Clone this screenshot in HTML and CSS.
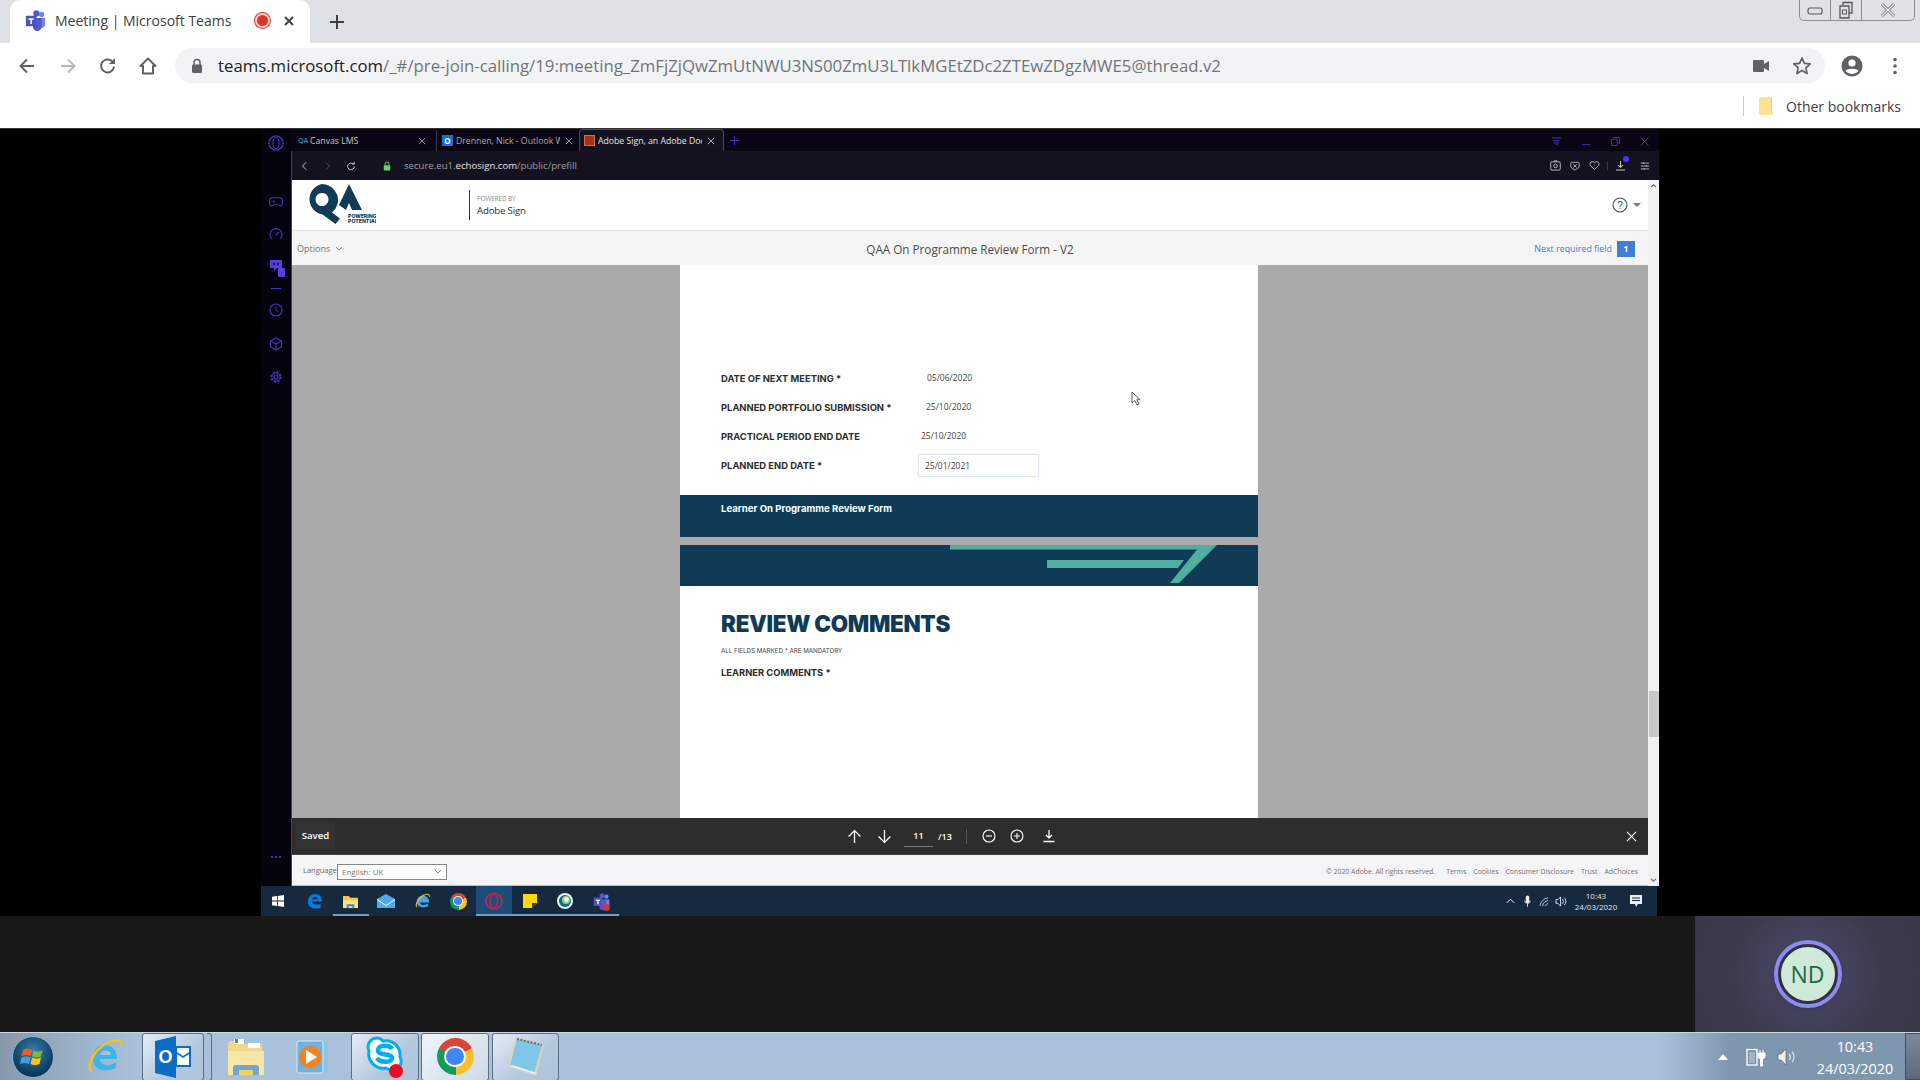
FILE: index.html
```html
<!DOCTYPE html>
<html lang="en">
<head>
<meta charset="utf-8">
<title>Meeting | Microsoft Teams</title>
<link rel="stylesheet" href="styles.css">
</head>
<body>
<svg class="defs" width="0" height="0" aria-hidden="true">
  <symbol id="teams" viewBox="0 0 24 24">
    <circle cx="19" cy="5" r="3" fill="#7b83eb"/><circle cx="13" cy="4" r="3.6" fill="#5059c9"/>
    <path d="M15 9h8v8a4 4 0 0 1-6 3z" fill="#7b83eb"/><path d="M8 9h11v10a5 5 0 0 1-10 0z" fill="#5059c9"/>
    <rect x="1" y="6.5" width="12" height="12" rx="1" fill="#4b53bc"/>
    <path d="M4 9.5h6v1.6H7.9V16H6.1v-4.9H4z" fill="#fff"/>
  </symbol>
</svg>

<header class="chrome">
  <div class="tabstrip">
    <div class="ctab">
      <svg class="ctab-ico" viewBox="0 0 24 24"><use href="#teams"/></svg>
      <span class="ctab-title">Meeting | Microsoft Teams</span>
      <span class="rec"></span>
      <svg class="ctab-x" viewBox="0 0 12 12"><path d="M2 2l8 8M10 2l-8 8" stroke="#3c4043" stroke-width="1.9"/></svg>
    </div>
    <svg class="newtab" viewBox="0 0 16 16"><path d="M8 1v14M1 8h14" stroke="#3c4043" stroke-width="2"/></svg>
    <div class="winctl">
      <span class="winbtn w1"><svg viewBox="0 0 16 10" width="16" height="10"><rect x="1" y="3" width="14" height="6" rx="2" fill="none" stroke="#55595f" stroke-width="1.2"/></svg></span>
      <span class="winbtn w2"><svg viewBox="0 0 18 18" width="18" height="18"><path d="M6 4V1.5h9V12h-3M3 5h9v12H3z" fill="#dee1e6" stroke="#55595f" stroke-width="1.3"/><rect x="5.5" y="9" width="4" height="4" fill="none" stroke="#55595f"/></svg></span>
      <span class="winbtn w3"><svg viewBox="0 0 16 16" width="16" height="16"><path d="M2 2l12 12M14 2L2 14" stroke="#6c7077" stroke-width="3"/><path d="M2 2l12 12M14 2L2 14" stroke="#eef0f2" stroke-width="1.4"/></svg></span>
    </div>
  </div>
  <div class="ctoolbar">
    <span class="cslot s-back"><svg viewBox="0 0 20 20" width="20" height="20"><path d="M17 10H4M10 3.500l-6.500 6.500 6.500 6.500" fill="none" stroke="#5f6368" stroke-width="2"/></svg></span>
    <span class="cslot s-fwd"><svg viewBox="0 0 20 20" width="20" height="20"><path d="M3 10h13M10 3.500l6.500 6.500-6.500 6.500" fill="none" stroke="#b6b9bd" stroke-width="2"/></svg></span>
    <span class="cslot s-rel"><svg viewBox="0 0 20 20" width="20" height="20"><path d="M16 10.500a6.500 6.500 0 1 1-2-5.300" fill="none" stroke="#5f6368" stroke-width="2"/><path d="M17 2v6h-6z" fill="#5f6368"/></svg></span>
    <span class="cslot s-home"><svg viewBox="0 0 20 20" width="20" height="20"><path d="M10 2.500L2.500 10H5v7.500h10V10h2.500z" fill="none" stroke="#5f6368" stroke-width="2" stroke-linejoin="round"/></svg></span>
    <div class="omnibox">
      <svg class="lock" viewBox="0 0 12 16" width="12" height="16"><path d="M3 7V4.500a3 3 0 0 1 6 0V7" fill="none" stroke="#5f6368" stroke-width="1.5"/><rect x="1" y="6.500" width="10" height="8.500" rx="1.200" fill="#5f6368"/></svg>
      <span class="url"><b>teams.microsoft.com</b>/_#/pre-join-calling/19:meeting_ZmFjZjQwZmUtNWU3NS00ZmU3LTlkMGEtZDc2ZTEwZDgzMWE5@thread.v2</span>
      <svg class="omni-cam" viewBox="0 0 18 14" width="18" height="14"><rect x="1" y="1" width="11" height="12" rx="1" fill="#5f6368"/><path d="M12 5l5-3v10l-5-3z" fill="#5f6368"/></svg>
      <svg class="omni-star" viewBox="0 0 20 20" width="20" height="20"><path d="M10 2l2.400 5.300 5.800.6-4.300 3.900 1.200 5.700L10 14.600l-5.100 2.900 1.200-5.700L1.800 7.900l5.800-.6z" fill="none" stroke="#5f6368" stroke-width="1.700" stroke-linejoin="round"/></svg>
    </div>
    <span class="cslot s-avatar"><svg viewBox="0 0 22 22" width="22" height="22"><circle cx="11" cy="11" r="10.500" fill="#5f6368"/><circle cx="11" cy="8" r="3.600" fill="#fff"/><path d="M4.500 16c2-3 11-3 13 0a8.500 8.500 0 0 1-13 0z" fill="#fff"/></svg></span>
    <span class="cslot s-menu"><svg viewBox="0 0 4 18" width="4" height="18"><circle cx="2" cy="2.500" r="1.800" fill="#5f6368"/><circle cx="2" cy="9" r="1.800" fill="#5f6368"/><circle cx="2" cy="15.500" r="1.800" fill="#5f6368"/></svg></span>
  </div>
  <div class="bookmarks">
    <span class="bm-sep"></span>
    <svg class="bm-folder" viewBox="0 0 16 20" width="16" height="20"><path d="M1 2.500A1.500 1.500 0 0 1 2.500 1H13v14h2v3a1 1 0 0 1-1 1H2.500A1.500 1.500 0 0 1 1 17.500z" fill="#fde293"/><path d="M13 1l1 1v13h-1z" fill="#f6cf62"/></svg>
    <span class="bm-label">Other bookmarks</span>
  </div>
</header>

<main class="remote">
  <div class="inner">
    <div class="opera">
      <nav class="op-side">
        <svg class="op-logo" viewBox="0 0 18 18" width="16" height="16"><circle cx="9" cy="9" r="8" fill="none" stroke="#4a33b8" stroke-width="1.500"/><ellipse cx="9" cy="9" rx="3.500" ry="6.500" fill="none" stroke="#4a33b8" stroke-width="1.300"/></svg>
        <svg class="si si-game" viewBox="0 0 16 14" width="14" height="12"><path d="M4 2h8a3.500 3.500 0 0 1 3.500 4v3a2.500 2.500 0 0 1-4.500 1.500L10 9.500H6l-1 1A2.500 2.500 0 0 1 .5 9V6A3.500 3.500 0 0 1 4 2z" fill="none" stroke="#4a33b8" stroke-width="1.200"/><path d="M4 6.500h3M5.500 5v3" stroke="#4a33b8"/></svg>
        <svg class="si si-speed" viewBox="0 0 14 14" width="14" height="14"><path d="M3 12a6 6 0 1 1 8 0" fill="none" stroke="#4a33b8" stroke-width="1.200"/><path d="M7 8l3-3" stroke="#4a33b8" stroke-width="1.300"/></svg>
        <span class="si si-twitch">
          <svg viewBox="0 0 14 14" width="14" height="14"><path d="M1 1h12v8h-5l-3 3V9H1z" fill="#5a3fe0"/><path d="M5 3.500v3M9 3.500v3" stroke="#090414" stroke-width="1.300"/></svg>
          <span class="tw-badge"></span>
        </span>
        <span class="si si-dash"></span>
        <svg class="si si-clock" viewBox="0 0 14 14" width="14" height="14"><circle cx="7" cy="7" r="6" fill="none" stroke="#4a33b8" stroke-width="1.200"/><path d="M7 3.500V7l2.500 1.500" fill="none" stroke="#4a33b8"/></svg>
        <svg class="si si-cube" viewBox="0 0 14 14" width="14" height="14"><path d="M7 1l5.500 3v6L7 13l-5.500-3V4zM1.500 4L7 7l5.500-3M7 7v6" fill="none" stroke="#4a33b8" stroke-width="1.100"/></svg>
        <svg class="si si-gear" viewBox="0 0 14 14" width="14" height="14"><circle cx="7" cy="7" r="2" fill="none" stroke="#4a33b8" stroke-width="1.100"/><circle cx="7" cy="7" r="4.600" fill="none" stroke="#4a33b8" stroke-width="2.400" stroke-dasharray="1.800 1.800"/><circle cx="7" cy="7" r="4.200" fill="none" stroke="#4a33b8" stroke-width=".8"/></svg>
        <span class="si-dots"><i></i><i></i><i></i></span>
      </nav>
      <div class="op-main">
        <div class="op-tabs">
          <div class="otab ot1">
            <span class="ot-qa">QA</span><span class="ot-text">Canvas LMS</span>
            <svg class="ot-x" viewBox="0 0 10 10" width="8" height="8"><path d="M1 1l8 8M9 1l-8 8" stroke="#b6b6bd"/></svg>
          </div>
          <div class="otab ot2">
            <span class="ot-ol">O</span><span class="ot-text ot-fade">Drennen, Nick - Outlook W</span>
            <svg class="ot-x" viewBox="0 0 10 10" width="8" height="8"><path d="M1 1l8 8M9 1l-8 8" stroke="#b6b6bd"/></svg>
          </div>
          <div class="otab ot3">
            <span class="ot-ad"></span><span class="ot-text ot-active">Adobe Sign, an Adobe Doc</span>
            <svg class="ot-x" viewBox="0 0 10 10" width="8" height="8"><path d="M1 1l8 8M9 1l-8 8" stroke="#d4d4da"/></svg>
          </div>
          <svg class="ot-plus" viewBox="0 0 10 10" width="9" height="9"><path d="M5 0v10M0 5h10" stroke="#4a33c8"/></svg>
          <div class="op-winctl">
            <svg viewBox="0 0 12 10" width="11" height="9"><path d="M1 1h10M2.500 4h7M6 9L3.500 6.500h5z" fill="none" stroke="#4a33c8"/></svg>
            <svg viewBox="0 0 10 10" width="9" height="9"><path d="M0 8.500h9" stroke="#4a33c8"/></svg>
            <svg viewBox="0 0 10 10" width="9" height="9"><path d="M3 2V.5h6.500V7H8M.5 2.500H7V9.500H.5z" fill="none" stroke="#4a33c8"/></svg>
            <svg viewBox="0 0 10 10" width="9" height="9"><path d="M.5.5l9 9M9.500.5l-9 9" stroke="#4a33c8"/></svg>
          </div>
        </div>
        <div class="op-addr">
          <svg class="oa-nav n1" viewBox="0 0 8 12" width="6" height="10"><path d="M7 1L2 6l5 5" fill="none" stroke="#c9c9cf" stroke-width="1.300"/></svg>
          <svg class="oa-nav n2" viewBox="0 0 8 12" width="6" height="10"><path d="M1 1l5 5-5 5" fill="none" stroke="#55535e" stroke-width="1.300"/></svg>
          <svg class="oa-nav n3" viewBox="0 0 12 12" width="10" height="10"><path d="M10 6.500a4 4 0 1 1-1.300-3" fill="none" stroke="#c9c9cf" stroke-width="1.200"/><path d="M10.500 1v3.300H7.200z" fill="#c9c9cf"/></svg>
          <svg class="oa-lock" viewBox="0 0 10 12" width="8" height="10"><path d="M2.500 5V3.500a2.500 2.500 0 0 1 5 0V5" fill="none" stroke="#6fd06f" stroke-width="1.200"/><rect x="1" y="5" width="8" height="6.500" rx=".7" fill="#6fd06f"/></svg>
          <span class="oa-url">secure.eu1.<b>echosign.com</b>/public/prefill</span>
          <div class="oa-tools">
            <svg viewBox="0 0 12 12" width="11" height="11"><rect x=".8" y="2" width="10.400" height="9" rx="1.500" fill="none" stroke="#c4c4cb"/><circle cx="6" cy="6.500" r="2" fill="none" stroke="#c4c4cb"/><path d="M4 2l.8-1.200h2.400L8 2" fill="none" stroke="#c4c4cb"/></svg>
            <svg viewBox="0 0 12 12" width="10" height="10"><path d="M2 1.500h8l1 1v5L6 11 1 7.500v-5z" fill="none" stroke="#c4c4cb"/><path d="M4 4.200l4 3.600M8 4.200l-4 3.600" stroke="#c4c4cb"/></svg>
            <svg viewBox="0 0 12 12" width="11" height="11"><path d="M6 10.500L1.500 6A2.700 2.700 0 0 1 6 3a2.700 2.700 0 0 1 4.500 3z" fill="none" stroke="#c4c4cb"/></svg>
            <span class="oa-sep"></span>
            <span class="oa-dl"><svg viewBox="0 0 12 12" width="11" height="11"><path d="M6 1v7M3.500 5.500L6 8l2.500-2.500M1 10.800h10" fill="none" stroke="#c4c4cb" stroke-width="1.100"/></svg><i class="oa-dot"></i></span>
            <svg viewBox="0 0 12 12" width="10" height="10"><path d="M1 2.500h10M1 6h10M1 9.500h10M4 1.500v2M8 5v2M5 8.500v2" stroke="#c4c4cb"/></svg>
          </div>
        </div>
        <div class="page-wrap">
          <div class="page-col">
            <div class="topbar">
              <svg class="qa-logo" viewBox="0 0 70 40" width="70" height="40">
                <path d="M16 0a16 16 0 0 1 10 28.500l8 6-4.500 5.500-13-9.500A15.500 15.500 0 0 1 16 0zm0 9a6.500 6.500 0 1 0 .01 0z" fill="#0f3b57"/>
                <path d="M43 0l13 26H46l-3-7-3 7-7-5z" fill="#0f3b57"/>
                <text x="42" y="33.500" class="qa-tag">POWERING</text><text x="42" y="39" class="qa-tag">POTENTIAL</text>
              </svg>
              <div class="powered">
                <span class="pw-small">POWERED BY</span>
                <span class="pw-big">Adobe Sign</span>
              </div>
              <div class="help">
                <svg viewBox="0 0 16 16" width="16" height="16"><circle cx="8" cy="8" r="7" fill="none" stroke="#4b4b4b" stroke-width="1.100"/><text x="8" y="11.500" class="help-q">?</text></svg>
                <span class="caret"></span>
              </div>
            </div>
            <div class="optbar">
              <div class="opt-left"><span>Options</span><svg viewBox="0 0 10 6" width="8" height="5"><path d="M1 1l4 4 4-4" fill="none" stroke="#777" stroke-width="1.100"/></svg></div>
              <div class="opt-title">QAA On Programme Review Form - V2</div>
              <div class="opt-next"><span>Next required field</span><span class="next-badge">1</span></div>
            </div>
            <div class="viewer">
              <div class="sheet">
                <div class="form-top">
                  <div class="frow"><span class="flabel">DATE OF NEXT MEETING *</span><span class="fval v1">05/06/2020</span></div>
                  <div class="frow"><span class="flabel">PLANNED PORTFOLIO SUBMISSION *</span><span class="fval v2">25/10/2020</span></div>
                  <div class="frow"><span class="flabel">PRACTICAL PERIOD END DATE</span><span class="fval v3">25/10/2020</span></div>
                  <div class="frow"><span class="flabel">PLANNED END DATE *</span><span class="finput">25/01/2021</span></div>
                </div>
                <div class="band band-a">Learner On Programme Review Form</div>
                <div class="sheet-gap"></div>
                <svg class="band-b" viewBox="0 0 578 41" width="578" height="41">
                  <rect width="578" height="41" fill="#0f3b57"/>
                  <path d="M270 0H537L499 38H490L517 4.500H270z" fill="#4fae9f"/>
                  <path d="M367 15H504L498 23H367z" fill="#4fae9f"/>
                </svg>
                <div class="form-bottom">
                  <h2 class="rc-title">REVIEW COMMENTS</h2>
                  <p class="rc-note">ALL FIELDS MARKED * ARE MANDATORY</p>
                  <p class="flabel rc-label">LEARNER COMMENTS *</p>
                </div>
                <svg class="cursor" viewBox="0 0 10 15" width="10" height="15"><path d="M1 1v11l2.800-2.500L6 14l2-1-2.200-4.300H9z" fill="#fff" stroke="#333" stroke-width=".8"/></svg>
              </div>
            </div>
            <div class="savebar">
              <span class="saved">Saved</span>
              <div class="pdfctl">
                <span class="pc pc-up"><svg viewBox="0 0 14 14" width="15" height="15"><path d="M7 13V1.500M1.500 7L7 1.500 12.500 7" fill="none" stroke="#fff" stroke-width="1.200"/></svg></span>
                <span class="pc pc-down"><svg viewBox="0 0 14 14" width="15" height="15"><path d="M7 1v11.500M1.500 7L7 12.500 12.500 7" fill="none" stroke="#fff" stroke-width="1.200"/></svg></span>
                <span class="pc-page">11</span>
                <span class="pc-total">/13</span>
                <span class="pc-sep"></span>
                <span class="pc pc-zo"><svg viewBox="0 0 14 14" width="14" height="14"><circle cx="7" cy="7" r="6" fill="none" stroke="#fff" stroke-width="1.100"/><path d="M4 7h6" stroke="#fff" stroke-width="1.100"/></svg></span>
                <span class="pc pc-zi"><svg viewBox="0 0 14 14" width="14" height="14"><circle cx="7" cy="7" r="6" fill="none" stroke="#fff" stroke-width="1.100"/><path d="M4 7h6M7 4v6" stroke="#fff" stroke-width="1.100"/></svg></span>
                <span class="pc pc-dl"><svg viewBox="0 0 14 14" width="14" height="14"><path d="M7 1v8M4 6l3 3 3-3M1.500 12.500h11" fill="none" stroke="#fff" stroke-width="1.300"/></svg></span>
              </div>
              <svg class="save-x" viewBox="0 0 12 12" width="11" height="11"><path d="M1 1l10 10M11 1L1 11" stroke="#fff" stroke-width="1.200"/></svg>
            </div>
            <footer class="ftr">
              <span class="ftr-lang">Language</span>
              <span class="ftr-select"><span>English: UK</span><svg viewBox="0 0 10 6" width="8" height="5"><path d="M1 1l4 4 4-4" fill="none" stroke="#666" stroke-width="1.100"/></svg></span>
              <div class="ftr-links">
                <span class="ftr-copy">© 2020 Adobe. All rights reserved.</span>
                <span>Terms</span><span>Cookies</span><span>Consumer Disclosure</span><span>Trust</span><span>AdChoices</span>
              </div>
            </footer>
          </div>
          <div class="scrollbar">
            <svg viewBox="0 0 8 6" width="7" height="5"><path d="M1 5l3-3 3 3" fill="none" stroke="#666" stroke-width="1.300"/></svg>
            <span class="thumb"></span>
            <svg viewBox="0 0 8 6" width="7" height="5"><path d="M1 1l3 3 3-3" fill="none" stroke="#666" stroke-width="1.300"/></svg>
          </div>
        </div>
      </div>
    </div>
    <div class="win10bar">
      <svg class="wb wb-start" viewBox="0 0 12 12" width="12" height="12"><path d="M0 1.700L5 1v4.600H0zM5.800.9L12 0v5.600H5.800zM0 6.400h5V11l-5-.7zM5.800 6.400H12V12l-6.200-.9z" fill="#fff"/></svg>
      <span class="wb"><svg viewBox="0 0 18 18" width="17" height="17"><path d="M2 9.500C2 4 6 1 10 1c4.500 0 7 3 7 8H6.500c.3 3 4.500 4.500 9 2v4.500c-6 2.500-13.500 0-13.500-6z" fill="#0a78d7"/><path d="M6.500 6.500h6c-.3-2.500-5.500-2.500-6 0z" fill="#17293f"/></svg></span>
      <span class="wb wb-on"><svg viewBox="0 0 18 16" width="17" height="15"><path d="M1 2h6l2 2h8v11H1z" fill="#f5c94f"/><path d="M1 7h16v8H1z" fill="#fbe08a"/><path d="M5 11h8v4h-2v-2H7v2H5z" fill="#3f88c7"/></svg></span>
      <span class="wb"><svg viewBox="0 0 18 14" width="18" height="14"><path d="M0 5l9-5 9 5v9H0z" fill="#4fa9e8"/><path d="M0 5l9 6 9-6v1l-9 6-9-6z" fill="#fff"/></svg></span>
      <span class="wb"><svg viewBox="0 0 18 18" width="17" height="17"><path d="M3 9.500C3 5 6 3 9.500 3S16 5.500 16 10H6.500c.3 3 4.500 3.500 8.500 1.500V14c-5.500 2.500-12 .5-12-4.500z" fill="#3ea7e8"/><path d="M3 15C1 13 4 5 11 2c3-1.500 6 0 5.500 2" fill="none" stroke="#e2b93e" stroke-width="1.200"/></svg></span>
      <span class="wb"><span class="chr chr-sm"></span></span>
      <span class="wb wb-sel"><svg viewBox="0 0 18 18" width="18" height="18"><circle cx="9" cy="9" r="8" fill="none" stroke="#b02a55" stroke-width="1.700"/><ellipse cx="9" cy="9" rx="3.600" ry="7" fill="none" stroke="#b02a55" stroke-width="1.500"/></svg></span>
      <span class="wb wb-on"><svg viewBox="0 0 14 14" width="14" height="14"><path d="M0 0h14v9l-5 5H0z" fill="#ffd800"/><path d="M14 9H9v5z" fill="#333"/></svg></span>
      <span class="wb wb-on"><svg viewBox="0 0 18 18" width="18" height="18"><circle cx="9" cy="9" r="8" fill="#eaf4f7"/><circle cx="9" cy="9" r="6" fill="#0b6f8f"/><circle cx="10" cy="8" r="4" fill="#9ed36a"/><circle cx="10.500" cy="7.500" r="2.300" fill="#fff"/></svg></span>
      <span class="wb wb-on wb-teams"><svg viewBox="0 0 24 24" width="17" height="17"><use href="#teams"/></svg><i class="busy"></i></span>
      <div class="tray10">
        <svg viewBox="0 0 10 6" width="9" height="6"><path d="M1 5l4-4 4 4" fill="none" stroke="#fff"/></svg>
        <svg viewBox="0 0 8 14" width="7" height="13"><rect x="2" y="0" width="4" height="9" rx="2" fill="#e8eef5"/><path d="M.8 6a3.200 3.200 0 0 0 6.400 0M4 9.500V13" fill="none" stroke="#e8eef5"/></svg>
        <svg class="t-wifi" viewBox="0 0 12 12" width="11" height="11"><path d="M1 11A10 10 0 0 1 10 2M4 11A7 7 0 0 1 10 5M7 11a4 4 0 0 1 3-3" fill="none" stroke="#c7d2dd"/></svg>
        <svg class="t-vol" viewBox="0 0 14 12" width="13" height="11"><path d="M1 4h2l3-3v10L3 8H1z" fill="none" stroke="#e8eef5"/><path d="M8 3.500a3.500 3.500 0 0 1 0 5M10 2a6 6 0 0 1 0 8" fill="none" stroke="#e8eef5"/></svg>
        <div class="clock10"><span>10:43</span><span>24/03/2020</span></div>
        <svg viewBox="0 0 12 12" width="12" height="12"><path d="M0 0h12v9H8l-2 3-1-3H0z" fill="#e8eef5"/><path d="M2 3h8M2 5.500h8" stroke="#17293f"/></svg>
      </div>
    </div>
  </div>
</main>

<section class="lower">
  <div class="tile">
    <div class="avatar"><span>ND</span></div>
  </div>
</section>

<footer class="win7">
  <div class="orb"><svg viewBox="0 0 26 26" width="26" height="26"><path d="M3 6c3-2 6-2 9 0l-1.500 6c-3-1.500-6-1.500-9 0z" fill="#f25c22"/><path d="M13.500 6.500c3 1.500 6 1.500 9-.5L21 12.500c-3 1.500-6 1.500-9-.5z" fill="#7dbb3c"/><path d="M1.500 13.500c3-1.500 6-1.500 9 0L9 20c-3-1.500-6-1.500-9 0z" fill="#39a3e4"/><path d="M12 13.500c3 1.500 6 1.500 9 0L19.500 20c-3 1.500-6 1.500-9 0z" fill="#fcc419"/></svg></div>
  <span class="w7pin pin-ie"><svg viewBox="0 0 38 40" width="38" height="40"><path d="M8 22C8 12 14 8 20 8s12 5 12 14H15c.5 7 10 8 16 3v6c-10 5-23 2-23-9z" fill="#3db4ec"/><path d="M15 18h11c-.5-6-10-6-11 0z" fill="#a9c1da"/><path d="M7 35C1 30 8 14 22 6c8-4 15-4 14 2" fill="none" stroke="#f3c21f" stroke-width="2.500"/></svg></span>
  <span class="w7box box-ol"><svg viewBox="0 0 36 42" width="36" height="42"><path d="M21 0L0 5v32l21 5z" fill="#0a6cc4"/><path d="M21 10h15v21H21z" fill="#0a6cc4"/><path d="M22 12h12v4l-6 4-6-4zM22 18l6 4 6-4v11H22z" fill="#fff"/><text x="10.500" y="27" class="ol-o">O</text></svg></span>
  <span class="w7notch"></span>
  <span class="w7pin pin-fold"><svg viewBox="0 0 40 40" width="40" height="40"><path d="M4 4h8l2 3h22v30H2V6z" fill="#f0d88c"/><path d="M8 2h10v5H8z" fill="#fff"/><path d="M9 2h3v4H9z" fill="#3fa34d"/><path d="M22 6h12v5H22z" fill="#fff"/><path d="M2 14h36v24H2z" fill="#f8e6a8"/><path d="M9 28h22a3 3 0 0 1 2 3v7h-6v-5H13v5H7v-7a3 3 0 0 1 2-3z" fill="#6fa8cf"/><path d="M13 33h14v5H13z" fill="#f0d060"/></svg></span>
  <span class="w7pin pin-media"><svg viewBox="0 0 34 36" width="34" height="36"><rect x="6" y="2" width="26" height="32" rx="2" fill="#8fc2e4"/><rect x="1" y="2" width="26" height="32" rx="2" fill="#6fb2dd" stroke="#d6ebf6"/><circle cx="14" cy="18" r="11" fill="#f58220"/><path d="M10 11l11 7-11 7z" fill="#fff"/></svg></span>
  <span class="w7box box-sk"><svg viewBox="0 0 40 44" width="40" height="44"><path d="M12 3a9 9 0 0 0-9 9c0 2 .5 3 1 4-2 9 6 19 17 17 1 1 3 2 6 2 6 0 10-5 9-10-.2-1-.5-1.800-1-3 1-9-6-18-17-16-1.500-2-3.500-3-6-3z" fill="#fff" stroke="#00aff0" stroke-width="3"/><path d="M27 14c-2-4-13-5-14 1-.5 6 14 3 14 8 0 5-12 5-15 0" fill="none" stroke="#00aff0" stroke-width="4.500"/><circle cx="31" cy="36" r="7" fill="#e60f25"/></svg></span>
  <span class="w7box box-chr"><span class="chr chr-lg"></span></span>
  <span class="w7box box-note"><svg viewBox="0 0 40 42" width="40" height="42"><path d="M10 1l28 7-8 32L2 31z" fill="#d9d3c0"/><path d="M11 3l25 6-8 29L4 30z" fill="#7ec7e6"/><path d="M4 30l24 8 3-1-25-8z" fill="#eef5f8"/><path d="M11 3l25 6" stroke="#666" stroke-width="2" stroke-dasharray="2 1.500"/></svg></span>
  <div class="tray7">
    <span class="tray-up"></span>
    <svg class="tray-batt" viewBox="0 0 20 20" width="20" height="20"><rect x="1" y="2.500" width="10" height="15.500" fill="none" stroke="#fff" stroke-width="1.300"/><path d="M3 5v11h6V5z" fill="#9fb2c6"/><path d="M12 6h7v3a3 3 0 0 1-2.500 3v7h-2v-7A3 3 0 0 1 12 9zM14 3v3M17 3v3" fill="#fff" stroke="#fff"/></svg>
    <svg class="tray-vol" viewBox="0 0 20 18" width="20" height="18"><path d="M1 6h3l5-5v16l-5-5H1z" fill="#e8eef3" stroke="#555" stroke-width=".6"/><path d="M12 6a4 4 0 0 1 0 6M15 4a7 7 0 0 1 0 10" fill="none" stroke="#e8eef3" stroke-width="1.100"/></svg>
    <div class="clock7"><span>10:43</span><span>24/03/2020</span></div>
    <span class="showdesk"></span>
  </div>
</footer>
</body>
</html>
```

FILE: styles.css
```css
* { box-sizing: border-box; }
html, body { margin: 0; padding: 0; }
body {
  width: 1920px; height: 1080px; overflow: hidden;
  display: flex; flex-direction: column;
  font-family: "Open Sans", "Liberation Sans", sans-serif;
  background: #000;
}
.defs { position: absolute; }
svg { display: block; flex: none; }

/* ---------- outer Chrome ---------- */
.chrome { height: 129px; flex: none; background: #fff; display: flex; flex-direction: column; }
.tabstrip { height: 43px; background: #dee1e6; display: flex; align-items: flex-start; padding-left: 10px; }
.ctab {
  width: 300px; height: 43px; background: #fff; border-radius: 10px 10px 0 0;
  display: flex; align-items: center; padding: 0 14px 2px 15px;
}
.ctab-ico { width: 21px; height: 21px; }
.ctab-title { margin-left: 9px; font-size: 14px; color: #3c4043; white-space: nowrap; width: 186px; }
.rec { width: 15px; height: 15px; border-radius: 50%; background: #e0352b; border: 2px solid #fbd1cd; box-shadow: 0 0 0 1px #e0352b; margin-left: 14px; }
.ctab-x { width: 12px; height: 12px; margin-left: 13px; }
.newtab { width: 16px; height: 16px; margin: 14px 0 0 19px; }
.winctl {
  margin-left: auto; margin-right: 5px; width: 116px; height: 21px; display: flex;
  border: 1px solid #8a8e94; border-top: 0; border-radius: 0 0 5px 5px;
}
.winbtn { display: flex; align-items: center; justify-content: center; height: 100%; }
.w1 { width: 31px; border-right: 1px solid #8a8e94; }
.w2 { width: 31px; border-right: 1px solid #8a8e94; }
.w3 { flex: 1; }

.ctoolbar { height: 42px; display: flex; align-items: flex-start; padding-top: 5px; }
.cslot { height: 35px; display: flex; align-items: center; justify-content: center; flex: none; }
.s-back { width: 54px; }
.s-fwd { width: 27px; }
.s-rel { width: 54px; }
.s-home { width: 25px; }
.omnibox {
  width: 1650px; margin-left: 15px; height: 35px; background: #f1f3f4; border-radius: 18px;
  display: flex; align-items: center; padding-left: 16px;
}
.url { margin-left: 15px; font-size: 16.77px; color: #70757a; white-space: nowrap; width: 1534px; }
.url b { font-weight: 400; color: #202124; }
.omni-star { margin-left: 22px; }
.s-avatar { width: 26px; margin-left: 14px; }
.s-menu { width: 16px; margin-left: 22px; }

.bookmarks { flex: 1; display: flex; align-items: center; padding-left: 1743px; padding-bottom: 1px; border-bottom: 1px solid #333; }
.bm-sep { width: 1px; height: 20px; background: #c8cacc; }
.bm-folder { margin-left: 14px; }
.bm-label { margin-left: 12px; font-size: 14px; color: #3c4043; white-space: nowrap; }

/* ---------- remote desktop ---------- */
.remote { height: 787px; flex: none; background: #000; padding-left: 261px; }
.inner { width: 1398px; height: 787px; display: flex; flex-direction: column; }
.opera { height: 757px; display: flex; background: #06030f; }
.op-side { width: 30px; flex: none; display: flex; flex-direction: column; align-items: center; background: #04020c; padding-top: 6px; }
.si { flex: none; }
.si-game { margin-top: 45px; }
.si-speed { margin-top: 19px; }
.si-twitch { margin-top: 18px; position: relative; display: block; width: 14px; height: 14px; }
.tw-badge { position: absolute; left: 9px; top: 9px; width: 7px; height: 9px; background: #5a3fe0; border-radius: 1px; }
.si-dash { margin-top: 15px; width: 10px; height: 1px; background: #4a33b8; }
.si-clock { margin-top: 14px; }
.si-cube { margin-top: 20px; }
.si-gear { margin-top: 19px; }
.si-dots { margin-top: auto; margin-bottom: 28px; display: flex; gap: 2px; }
.si-dots i { width: 2px; height: 2px; background: #5a3fe0; border-radius: 50%; }

.op-main { flex: 1; display: flex; flex-direction: column; min-width: 0; border-left: 1px solid #4330a8; }
.op-tabs { height: 22px; background: #0a0514; display: flex; align-items: flex-end; position: relative; margin-left: -1px; padding-left: 1px; }
.otab { height: 21px; display: flex; align-items: center; flex: none; font-size: 8.7px; color: #b9b9c0; }
.ot-text { white-space: nowrap; overflow: hidden; }
.ot1 { width: 144px; padding-left: 6px; }
.ot1 .ot-text { width: 103px; margin-left: 3px; color: #c6c6cc; }
.ot-qa { font-size: 7px; font-weight: 700; color: #2b7d93; width: 9px; }
.ot2 { width: 144px; border-left: 1px solid #3a3a44; }
.ot-ol { width: 11px; height: 11px; margin-left: 5px; background: #1f6fc9; color: #fff; font-size: 8px; font-weight: 700; line-height: 11px; text-align: center; }
.ot2 .ot-text { width: 104px; margin-left: 3px; color: #a9a9b0; }
.ot3 { width: 145px; height: 22px; border: 1px solid #4a33c8; border-bottom: 0; border-radius: 4px 4px 0 0; background: #15121f; padding-left: 4px; margin-left: -1px; }
.ot-ad { width: 11px; height: 11px; background: #a8321c; border: 1px solid #d86a50; }
.ot-active { width: 104px; margin-left: 3px; color: #e6e6ea; }
.ot-x { margin-left: 5px; }
.ot-plus { margin: 0 0 6px 6px; }
.op-winctl { margin-left: auto; margin-right: 10px; margin-bottom: 5px; display: flex; gap: 20px; }
.op-addr { height: 29px; background: #15121f; display: flex; align-items: center; color: #bcbcc4; }
.oa-nav { flex: none; }
.n1 { margin-left: 9px; }
.n2 { margin-left: 18px; }
.n3 { margin-left: 15px; }
.oa-lock { margin-left: 27px; }
.oa-url { margin-left: 13px; font-size: 9.6px; white-space: nowrap; color: #9c9ca5; }
.oa-url b { font-weight: 400; color: #e4e4e8; }
.oa-tools { margin-left: auto; margin-right: 9px; display: flex; align-items: center; gap: 9px; }
.oa-sep { width: 1px; height: 9px; background: #3a3844; margin: 0 -2px; }
.oa-dl { position: relative; display: block; margin-right: 5px; }
.oa-dot { position: absolute; right: -3px; top: -4px; width: 6px; height: 6px; border-radius: 50%; background: #4a32ff; }

.page-wrap { flex: 1; display: flex; min-height: 0; }
.page-col { flex: 1; min-width: 0; display: flex; flex-direction: column; }
.scrollbar { width: 11px; flex: none; background: #f1f1f1; display: flex; flex-direction: column; align-items: center; padding: 3px 0; }
.thumb { width: 10px; height: 46px; background: #c8c8c8; margin-top: 503px; margin-bottom: auto; }

.topbar { height: 51px; background: #fff; border-bottom: 1px solid #e3e3e3; display: flex; align-items: center; padding-left: 14px; flex: none; }
.qa-logo { margin-top: -3px; }
.qa-tag { font-family: "Inter", sans-serif; font-weight: 800; font-size: 5.2px; fill: #0f3b57; }
.powered { margin-left: 93px; padding: 2px 0 0 7px; height: 30px; border-left: 1px solid #333; display: flex; flex-direction: column; justify-content: center; }
.pw-small { font-size: 6.2px; color: #8a8a8a; line-height: 8px; }
.pw-big { font-size: 9.7px; color: #2c2c2c; line-height: 15px; letter-spacing: -.2px; }
.help { margin-left: auto; margin-right: 7px; display: flex; align-items: center; gap: 5px; }
.help-q { font-family: "Liberation Sans", sans-serif; font-size: 10px; text-anchor: middle; fill: #4b4b4b; }
.caret { width: 0; height: 0; border-left: 4px solid transparent; border-right: 4px solid transparent; border-top: 4px solid #777; }

.optbar { height: 34px; background: #f5f5f5; display: grid; grid-template-columns: 1fr auto 1fr; align-items: center; padding: 1px 13px 0; flex: none; }
.opt-left { display: flex; align-items: center; gap: 5px; font-size: 9px; color: #707070; margin-left: -8px; }
.opt-title { font-size: 11.7px; color: #4b4b4b; }
.opt-next { justify-self: end; display: flex; align-items: center; gap: 5px; font-size: 8.9px; color: #3e7bd0; }
.next-badge { width: 18px; height: 16px; background: #3f7fd6; color: #fff; font-size: 8.5px; font-weight: 700; display: flex; align-items: center; justify-content: center; }

.viewer { flex: 1; min-height: 0; background: #aaa; display: flex; justify-content: center; overflow: hidden; padding-right: 2px; }
.sheet { width: 578px; background: #fff; position: relative; }
.form-top { padding: 99px 0 15px 41px; }
.frow { height: 29px; display: flex; align-items: center; }
.flabel { font-family: "Inter", "Liberation Sans", sans-serif; font-weight: 700; font-size: 9.4px; color: #2e2e2e; white-space: nowrap; width: 206px; margin: 0; }
.fval { font-size: 8.5px; color: #444; margin-top: -2px; }
.v2 { margin-left: -1px; }
.v3 { margin-left: -6px; }
.finput { width: 121px; height: 23px; margin-left: -9px; border: 1px solid #dde6f5; box-shadow: 0 0 1px #c7d8f2; padding-left: 6px; font-size: 8.5px; color: #444; display: flex; align-items: center; }
.band-a { height: 42px; background: #0f3b57; color: #fff; font-family: "Inter", sans-serif; font-weight: 700; font-size: 9.6px; padding: 8px 0 0 41px; line-height: 12px; }
.sheet-gap { height: 8px; background: #aaa; margin: 0 -1px; }
.form-bottom { padding: 25px 0 0 41px; }
.rc-title { margin: 0; font-family: "Inter", sans-serif; font-weight: 900; font-size: 22.4px; line-height: 25px; color: #0f3b57; letter-spacing: -.3px; }
.rc-note { margin: 11px 0 0; font-family: "Inter", sans-serif; font-size: 6.2px; line-height: 8px; color: #444; }
.rc-label { margin-top: 12px; line-height: 11px; }
.cursor { position: absolute; left: 451px; top: 126px; }

.savebar { height: 37px; background: #2d2d2d; display: flex; align-items: center; padding-left: 4px; flex: none; border-bottom: 1px solid #444; }
.saved { width: 39px; height: 27px; margin-top: -1px; background: #333; color: #fff; font-size: 9.6px; font-weight: 600; display: flex; align-items: center; justify-content: center; }
.pdfctl { margin-left: 505px; display: flex; align-items: center; color: #fff; }
.pc { display: flex; align-items: center; justify-content: center; }
.pc-up { width: 29px; }
.pc-down { width: 30px; }
.pc-page { width: 29px; margin-left: 5px; height: 22px; border-bottom: 1px solid #777; font-size: 9px; font-weight: 600; display: flex; align-items: center; justify-content: center; }
.pc-total { width: 15px; margin-left: 5px; font-size: 9px; font-weight: 600; }
.pc-sep { width: 1px; height: 15px; background: #555; margin-left: 13px; }
.pc-zo { width: 14px; margin-left: 15px; }
.pc-zi { width: 14px; margin-left: 14px; }
.pc-dl { width: 14px; margin-left: 18px; }
.save-x { margin-left: auto; margin-right: 11px; }

.ftr { height: 31px; background: #f5f4f7; display: flex; align-items: center; padding: 3px 10px 0 11px; flex: none; border-bottom: 1px solid #b8c0c8; }
.ftr-lang { font-size: 7.5px; color: #666; margin-top: -3px; width: 35px; white-space: nowrap; }
.ftr-select { width: 110px; height: 16px; margin-left: -1px; background: #fff; border: 1px solid #888; display: flex; align-items: center; justify-content: space-between; padding: 0 4px; font-size: 8px; color: #777; }
.ftr-links { margin-left: auto; display: flex; gap: 7px; font-size: 6.9px; color: #717171; white-space: nowrap; }
.ftr-copy { margin-right: 4px; }

/* inner Windows taskbar */
.win10bar { height: 30px; margin-right: 2px; background: #17293f; display: flex; align-items: center; padding-left: 11px; flex: none; }
.wb { width: 35.8px; height: 30px; display: flex; align-items: center; justify-content: center; flex: none; position: relative; }
.wb-start { width: 12px; height: 12px; margin-right: 13px; }
.wb-on { box-shadow: inset 0 -2px 0 #6e9fc8; }
.wb-sel { background: #1d4d77; box-shadow: inset 0 -2px 0 #6e9fc8; }
.busy { position: absolute; right: 9px; bottom: 5px; width: 7px; height: 7px; border-radius: 50%; background: #d13438; }
.tray10 { margin-left: auto; display: flex; align-items: center; gap: 9px; padding-right: 15px; color: #dfe7ef; }
.t-wifi { margin-left: -1px; }
.t-vol { margin-left: -4px; }
.clock10 { width: 40px; display: flex; flex-direction: column; align-items: center; font-size: 8px; line-height: 11px; margin: 0 5px 0 -1px; }

.chr { display: block; border-radius: 50%; position: relative; background: conic-gradient(from -62deg, #db4437 0 124deg, #fbc02d 124deg 240deg, #0f9d58 240deg 360deg); }
.chr::after { content: ""; position: absolute; inset: 27%; border-radius: 50%; background: #4285f4; box-shadow: 0 0 0 2px #fff; }
.chr-sm { width: 17px; height: 17px; }
.chr-sm::after { box-shadow: 0 0 0 1px #fff; }
.chr-lg { width: 37px; height: 37px; }

/* lower band + video tile */
.lower { height: 116px; flex: none; background: #191919; display: flex; justify-content: flex-end; }
.tile { width: 225px; background: radial-gradient(circle at 50% 50%, #4b4b70 0, #3c3b4c 60%, #3a3947 100%); display: flex; align-items: center; justify-content: center; }
.avatar { width: 60px; height: 60px; border-radius: 50%; background: #cfe9d9; border: 3px solid #312f40; box-shadow: 0 0 0 4px #8b8cec, 0 3px 8px rgba(0,0,0,.4); display: flex; align-items: center; justify-content: center; font-size: 23px; color: #1a6b45; }

/* Windows 7 taskbar */
.win7 { height: 48px; flex: none; display: flex; align-items: center; background: linear-gradient(90deg, #8898ac 0, #9fb5cd 90px, #a9c1da 140px, #a9c1da 1660px, #7f97ae 1730px, #7f97ae 100%); border-top: 1px solid #c9d6e3; }
.orb { width: 42px; height: 42px; margin-left: 12px; border-radius: 50%; background: radial-gradient(circle at 50% 35%, #3a7fa8 0, #0b3a5e 70%, #0a2c48 100%); border: 1px solid #8fb3cc; display: flex; align-items: center; justify-content: center; flex: none; }
.w7pin { flex: none; display: flex; align-items: center; justify-content: center; }
.pin-ie { width: 38px; margin-left: 31px; }
.w7box { height: 48px; flex: none; display: flex; align-items: center; justify-content: center; background: linear-gradient(135deg, #e4ecf4 0, #b4c8dd 60%, #aec4da 100%); border: 1px solid #5c6e80; border-radius: 3px; }
.box-ol { width: 62px; margin-left: 19px; }
.w7notch { width: 5px; height: 48px; margin-left: 3px; border: 1px solid #5c6e80; border-left: 0; border-radius: 0 3px 3px 0; }
.pin-fold { width: 40px; margin-left: 14px; }
.pin-media { width: 34px; margin-left: 30px; }
.box-sk { width: 68px; margin-left: 21px; }
.box-chr { width: 68px; margin-left: 2px; background: linear-gradient(135deg, #f0f4f8 0, #cddbe8 100%); }
.box-note { width: 67px; margin-left: 3px; }
.tray7 { margin-left: auto; display: flex; align-items: center; height: 100%; color: #fff; }
.tray-up { width: 0; height: 0; border-left: 5px solid transparent; border-right: 5px solid transparent; border-bottom: 6px solid #fff; }
.tray-batt { margin-left: 18px; }
.tray-vol { margin-left: 11px; }
.clock7 { width: 90px; margin-left: 13px; padding-top: 2px; display: flex; flex-direction: column; align-items: center; font-size: 14.4px; line-height: 22px; color: #fff; }
.showdesk { width: 15px; height: 47px; margin-left: 5px; background: linear-gradient(#7a8a9a, #5a6a7a); border: 1px solid #3f4f5f; border-right: 0; }
.ol-o { font-family: "Liberation Sans", sans-serif; font-weight: 700; font-size: 18px; fill: #fff; text-anchor: middle; }
```
